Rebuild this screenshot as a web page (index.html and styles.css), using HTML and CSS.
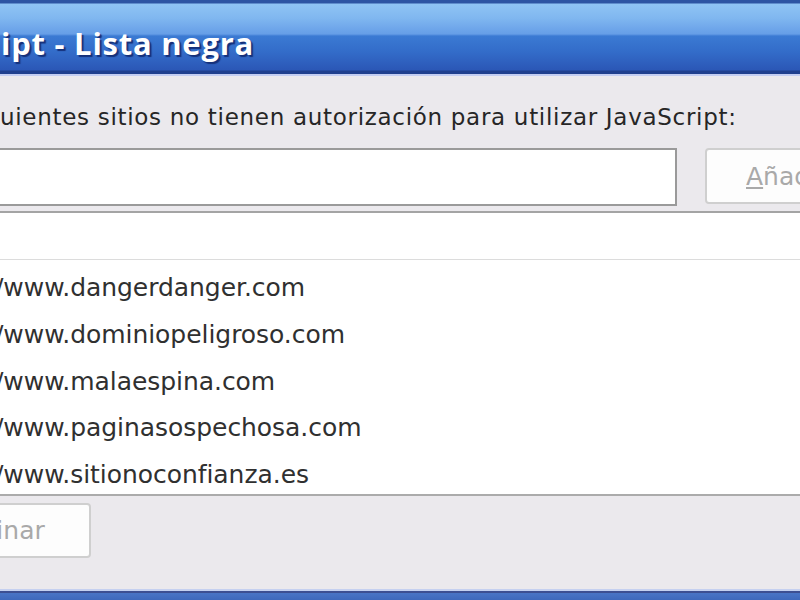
FILE: index.html
```html
<!DOCTYPE html>
<html lang="es">
<head>
<meta charset="utf-8">
<title>JavaScript - Lista negra</title>
<link rel="stylesheet" href="styles.css">
</head>
<body>
<div class="window">
  <div class="titlebar"><span class="title">ipt - Lista negra</span></div>
  <div class="client">
    <div class="label">uientes sitios no tienen autorización para utilizar JavaScript:</div>
    <div class="addrow">
      <div class="input"></div>
      <div class="btn btn-add"><span class="ul">A</span>ñadir</div>
    </div>
    <div class="list">
      <div class="list-head"></div>
      <div class="item">/www.dangerdanger.com</div>
      <div class="item">/www.dominiopeligroso.com</div>
      <div class="item">/www.malaespina.com</div>
      <div class="item">/www.paginasospechosa.com</div>
      <div class="item">/www.sitionoconfianza.es</div>
    </div>
    <div class="btn btn-del">minar</div>
    <div class="frame-bottom"></div>
  </div>
</div>
</body>
</html>
```
FILE: styles.css
```css
html, body {
  margin: 0;
  padding: 0;
}
body {
  width: 800px;
  height: 600px;
  overflow: hidden;
  background: #ebe9ed;
  font-family: "DejaVu Sans", sans-serif;
}
.window {
  display: flex;
  flex-direction: column;
  height: 600px;
}
.titlebar {
  flex: none;
  height: 76px;
  display: flex;
  align-items: center;
  background: linear-gradient(to bottom,
    #2d55a3 0px, #2d55a3 3px,
    #8fc4f4 4px, #80b7f0 18px, #669ee7 34px,
    #3b7ad3 36px, #336cc9 52px, #2b57b6 70px,
    #1f3f8e 71px, #1f3f8e 74px,
    #c3cdf2 74px, #c3cdf2 76px);
}
.title {
  font-family: "Open Sans", "DejaVu Sans", sans-serif;
  font-weight: bold;
  font-size: 31px;
  letter-spacing: 0.75px;
  color: #ffffff;
  text-shadow: 2px 2px 1px #15307a;
  margin-left: 1px;
  padding-top: 9px;
}
.client {
  flex: 1;
  display: flex;
  flex-direction: column;
}
.label {
  margin-top: 26px;
  height: 30px;
  line-height: 30px;
  font-size: 23px;
  letter-spacing: 0.7px;
  color: #262626;
  white-space: nowrap;
}
.addrow {
  display: flex;
  margin-top: 16px;
  align-items: flex-start;
}
.input {
  flex: none;
  margin-left: -10px;
  width: 683px;
  height: 54px;
  background: #fff;
  border: 2px solid #9a9a9a;
}
.btn {
  flex: none;
  box-sizing: border-box;
  background: #fdfdfd;
  border: 2px solid #cfcfcf;
  border-radius: 4px;
  color: #a9a9a9;
  font-size: 25px;
  display: flex;
  align-items: center;
}
.btn-add {
  margin-left: 28px;
  width: 130px;
  height: 56px;
  padding-left: 39px;
}
.ul {
  text-decoration: underline;
}
.list {
  flex: none;
  margin-top: 5px;
  background: #fff;
  border-top: 2px solid #a4a4a4;
  border-bottom: 2px solid #ababab;
}
.list-head {
  box-sizing: border-box;
  height: 47px;
  border-bottom: 1px solid #dcdcdc;
}
.item {
  box-sizing: border-box;
  height: 46.8px;
  line-height: 46.8px;
  padding-top: 5px;
  font-size: 25px;
  letter-spacing: -0.05px;
  color: #303030;
  margin-left: -5px;
  white-space: nowrap;
}
.btn-del {
  margin-top: 7px;
  margin-left: -30px;
  width: 121px;
  height: 55px;
  padding-left: 0;
}
.frame-bottom {
  margin-top: auto;
  height: 11px;
  background: linear-gradient(to bottom,
    #c5d0f0 0px, #c5d0f0 2px,
    #3d4f92 2px, #3d4f92 4px,
    #4a74c6 4px, #3f68bb 11px);
}
```
